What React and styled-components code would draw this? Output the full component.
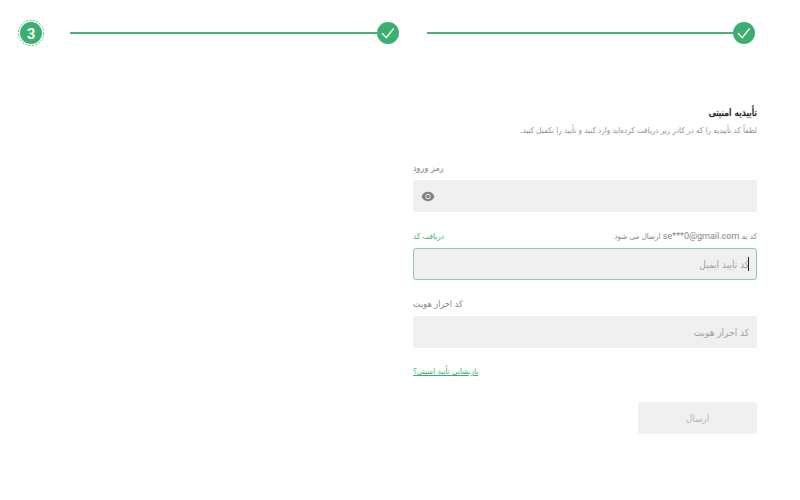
import { useState } from "react";
import styled, { createGlobalStyle } from "styled-components";

function DoneStep() {
  return (
    <Step $grow>
      <Circle>
        <svg width="22" height="22" viewBox="0 0 22 22" aria-hidden="true">
          <path
            d="M5.2 11.3 9.3 15.7 16.7 6.4"
            fill="none"
            stroke="#fff"
            strokeWidth="1.4"
          />
        </svg>
      </Circle>
      <Line />
    </Step>
  );
}

function CurrentStep({ number }) {
  return (
    <Step aria-current="step">
      <Ring>
        <RingDrawing viewBox="0 0 28 28" aria-hidden="true">
          <circle
            cx="14"
            cy="14"
            r="12.7"
            fill="none"
            stroke="#3caf6f"
            strokeWidth="0.8"
            strokeDasharray="2 1.4"
          />
        </RingDrawing>
        <Circle>
          <StepNumber>{number}</StepNumber>
        </Circle>
      </Ring>
    </Step>
  );
}

function EyeIcon() {
  return (
    <svg width="14" height="14" viewBox="0 0 14 14" aria-hidden="true">
      <path
        d="M7 2.8C3.9 2.8 1.6 4.7.6 7.5c1 2.8 3.3 4.7 6.4 4.7s5.400-1.900 6.400-4.700C12.400 4.700 10.100 2.800 7 2.800Z"
        fill="#808080"
      />
      <circle cx="7" cy="7.5" r="2.3" fill="#808080" stroke="#f0f0f0" strokeWidth="1" />
    </svg>
  );
}

export default function App() {
  const [showPassword, setShowPassword] = useState(false);
  const [password, setPassword] = useState("");
  const [emailCode, setEmailCode] = useState("");
  const [authCode, setAuthCode] = useState("");

  return (
    <Page dir="rtl" lang="fa">
      <GlobalStyle />
      <Steps>
        <DoneStep />
        <DoneStep />
        <CurrentStep number="3" />
      </Steps>

      <Form onSubmit={(e) => e.preventDefault()}>
        <Title>تأییدیه امنیتی</Title>
        <Subtitle>
          لطفاً کد تأییدیه را که در کادر زیر دریافت کرده‌اید وارد کنید و تأیید را تکمیل کنید.
        </Subtitle>

        <Field>
          <LabelRow $end>
            <label htmlFor="password">رمز ورود</label>
          </LabelRow>
          <InputBox>
            <Input
              id="password"
              type={showPassword ? "text" : "password"}
              value={password}
              onChange={(e) => setPassword(e.target.value)}
            />
            <EyeButton
              type="button"
              aria-label="نمایش رمز"
              onClick={() => setShowPassword((s) => !s)}
            >
              <EyeIcon />
            </EyeButton>
          </InputBox>
        </Field>

        <Field>
          <LabelRow>
            <label htmlFor="email-code">
              کد به <Email dir="ltr">se***0@gmail.com</Email> ارسال می شود
            </label>
            <CodeButton type="button">دریافت کد</CodeButton>
          </LabelRow>
          <InputBox $active>
            {!emailCode && <Caret />}
            <Input
              id="email-code"
              placeholder="کد تأیید ایمیل"
              value={emailCode}
              onChange={(e) => setEmailCode(e.target.value)}
            />
          </InputBox>
        </Field>

        <Field>
          <LabelRow $end>
            <label htmlFor="auth-code">کد احراز هویت</label>
          </LabelRow>
          <InputBox>
            <Input
              id="auth-code"
              placeholder="کد احراز هویت"
              value={authCode}
              onChange={(e) => setAuthCode(e.target.value)}
            />
          </InputBox>
        </Field>

        <ResetLink href="#reset">بازنشانی تأیید امنیتی؟</ResetLink>
        <Submit disabled>ارسال</Submit>
      </Form>
    </Page>
  );
}

const GlobalStyle = createGlobalStyle`
  * {
    box-sizing: border-box;
  }

  body {
    margin: 0;
    background: #fff;
    font-family: "DejaVu Sans Condensed", "DejaVu Sans", sans-serif;
  }

  button, input {
    font-family: inherit;
  }
`;

const Page = styled.main`
  padding: 19px 0;
`;

const Steps = styled.div`
  display: flex;
  align-items: center;
  gap: 28px;
  padding: 0 45px 0 17px;
`;

const Step = styled.div`
  display: flex;
  align-items: center;
  flex: ${(props) => (props.$grow ? "1" : "none")};
`;

const Circle = styled.div`
  display: flex;
  align-items: center;
  justify-content: center;
  flex: none;
  width: 22px;
  height: 22px;
  border-radius: 50%;
  background: #3caf6f;
`;

const StepNumber = styled.span`
  padding-top: 2px;
  color: #fff;
  font-family: Roboto, sans-serif;
  font-size: 15px;
  font-weight: 700;
  line-height: 20px;
`;

const Ring = styled.div`
  display: grid;
  place-items: center;
  position: relative;
  width: 28px;
  height: 28px;
  margin-right: -3px;
`;

const RingDrawing = styled.svg`
  position: absolute;
  inset: 0;
`;

const Line = styled.div`
  flex: 1;
  height: 2px;
  background: #4db078;
`;

const Form = styled.form`
  display: flex;
  flex-direction: column;
  width: 43%;
  margin: 58px 43px 0 0;
`;

const Title = styled.h1`
  margin: 0;
  color: #1c1c1c;
  font-size: 10px;
  font-weight: 400;
  line-height: 16px;
  text-shadow: 0 0 1px #1c1c1c;
`;

const Subtitle = styled.p`
  margin: 2px 0 21px;
  color: #909090;
  font-size: 8px;
  line-height: 16px;
  white-space: nowrap;
`;

const Field = styled.div`
  margin-bottom: 16px;
`;

const LabelRow = styled.div`
  display: flex;
  align-items: center;
  justify-content: ${(props) => (props.$end ? "flex-end" : "space-between")};
  height: 16px;
  margin-bottom: 4px;
  color: #858585;
  font-size: ${(props) => (props.$end ? "9px" : "8px")};
  line-height: 16px;
`;

const Email = styled.span`
  font-family: Roboto, sans-serif;
  font-size: 9px;
`;

const CodeButton = styled.button`
  border: none;
  padding: 0;
  background: none;
  color: #3caf6f;
  font-size: 8px;
  cursor: pointer;
`;

const InputBox = styled.div`
  display: flex;
  align-items: center;
  position: relative;
  height: 32px;
  padding: 0 7px;
  border: 1px solid ${(props) => (props.$active ? "#8ccbad" : "#f0f0f0")};
  border-radius: 3px;
  background: #f0f0f0;
`;

const Input = styled.input`
  flex: 1;
  min-width: 0;
  padding: 0;
  border: none;
  outline: none;
  background: none;
  color: #1c1c1c;
  font-size: 10px;

  &::placeholder {
    color: #a0a0a0;
    opacity: 1;
  }
`;

const Caret = styled.span`
  position: absolute;
  right: 7px;
  width: 1px;
  height: 14px;
  background: #222;
`;

const EyeButton = styled.button`
  display: flex;
  border: none;
  padding: 0;
  background: none;
  cursor: pointer;
`;

const ResetLink = styled.a`
  align-self: flex-end;
  color: #3caf6f;
  font-size: 8px;
  line-height: 16px;
`;

const Submit = styled.button`
  width: 119px;
  height: 32px;
  margin-top: 22px;
  border: none;
  border-radius: 3px;
  background: #f0f0f0;
  color: #b8b8b8;
  font-size: 10px;
`;
